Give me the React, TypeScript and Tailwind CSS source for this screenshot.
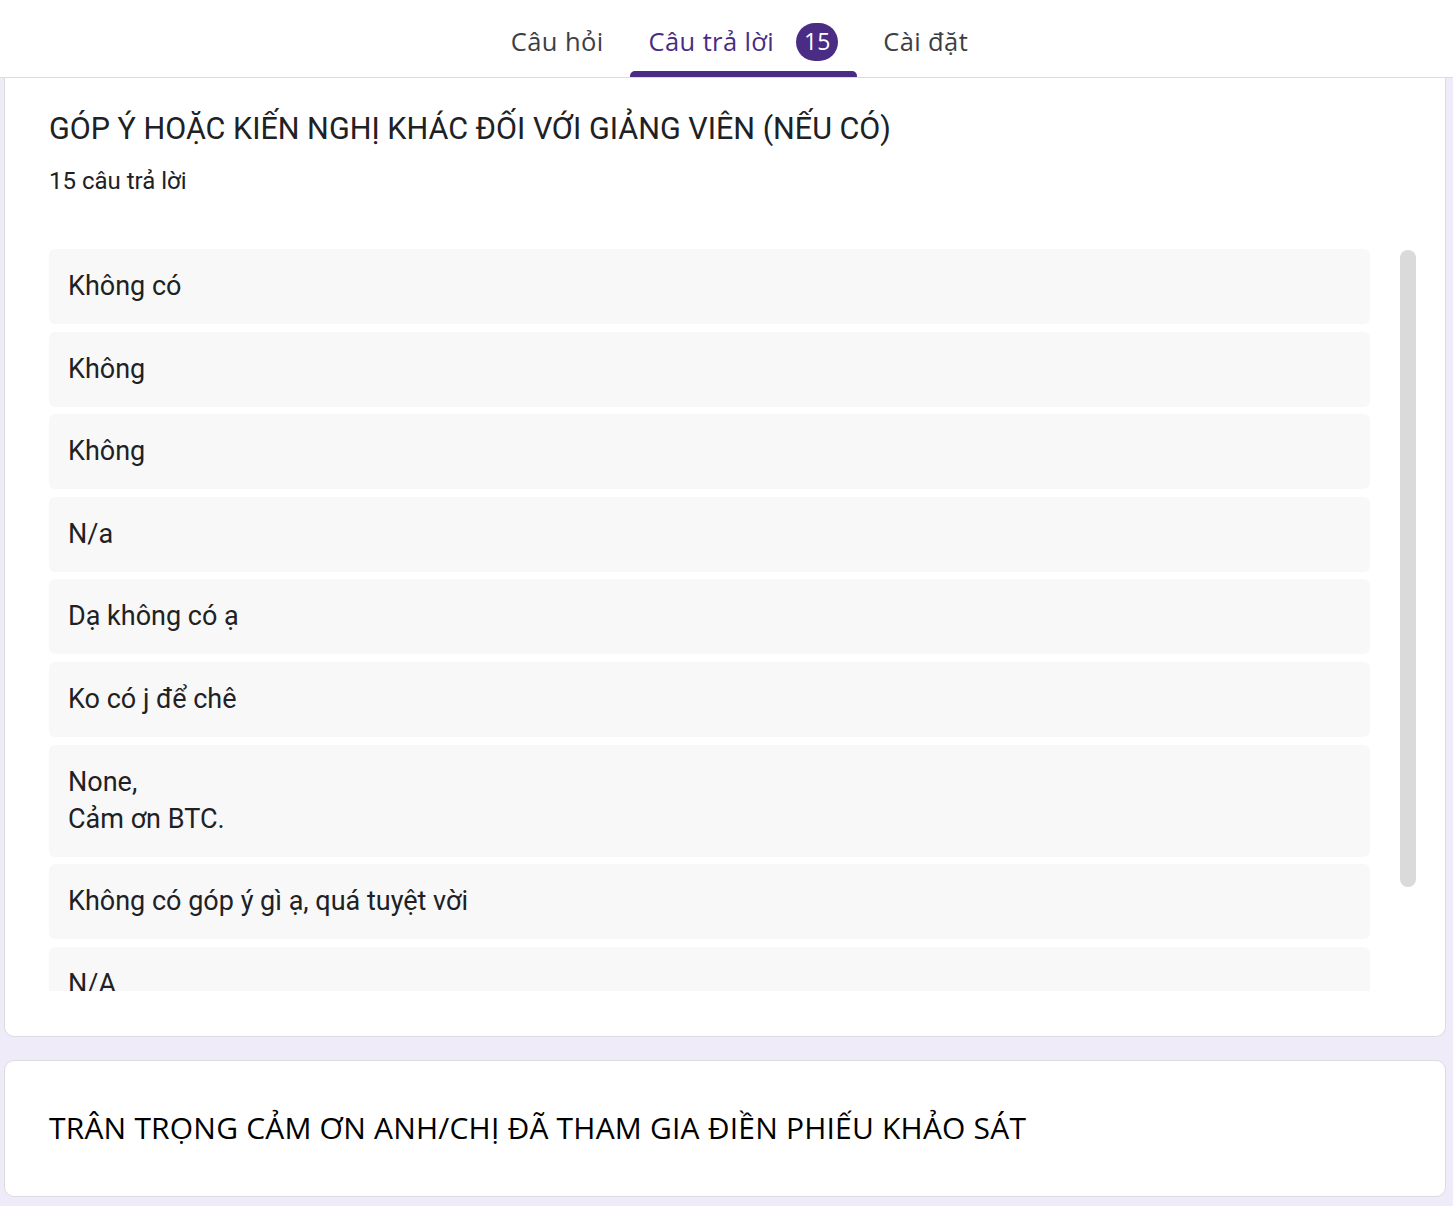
import React from "react";

const responses: string[][] = [
  ["Không có"],
  ["Không"],
  ["Không"],
  ["N/a"],
  ["Dạ không có ạ"],
  ["Ko có j để chê"],
  ["None,", "Cảm ơn BTC."],
  ["Không có góp ý gì ạ, quá tuyệt vời"],
  ["N/A"],
  ["Không"],
];

export default function App() {
  return (
    <div className="w-full bg-[#f0ebf8] overflow-hidden" style={{ height: 1206 }}>
      {/* Header tabs */}
      <div className="h-[78px] bg-white border-b border-[#dadce0] flex justify-center items-stretch pl-[26px] gap-[7px] font-['Open_Sans',sans-serif] text-[25.5px] tracking-[0.4px]">
        <div className="px-[19px] flex items-center text-[#3c4043] pt-[6px]">Câu hỏi</div>
        <div className="px-[19px] relative flex items-center text-[#4a2c85] pt-[6px]">
          <span>Câu trả lời</span>
          <span className="ml-[22px] w-[42px] h-[38px] rounded-full bg-[#4a2c85] text-white text-[23px] tracking-normal flex items-center justify-center">15</span>
          <div className="absolute left-0 right-0 bottom-0 h-[6px] bg-[#4a2c85] rounded-t-[5px]" />
        </div>
        <div className="px-[19px] flex items-center text-[#3c4043] pt-[6px]">Cài đặt</div>
      </div>

      {/* Card 1 */}
      <div className="mx-[4px] w-[1442px] bg-white border-x border-b border-[#dadce0] rounded-b-[10px] pl-[44px] pr-[29px] pt-[29px] pb-[45px] font-['Roboto',sans-serif]">
        <div className="text-[30.5px] leading-[44px] text-[#202124]">GÓP Ý HOẶC KIẾN NGHỊ KHÁC ĐỐI VỚI GIẢNG VIÊN (NẾU CÓ)</div>
        <div className="mt-[15px] text-[24px] leading-[30px] text-[#202124]">15 câu trả lời</div>
        <div className="mt-[53px] flex gap-[30px]">
          <div className="w-[1321px] h-[742px] overflow-hidden flex flex-col gap-[7.6px]">
            {responses.map((lines, i) => (
              <div key={i} className="shrink-0 bg-[#f8f8f8] rounded-[6px] px-[19px] py-[19px] text-[27px] leading-[37px] text-[#202124]">
                {lines.map((l, j) => (
                  <div key={j}>{l}</div>
                ))}
              </div>
            ))}
          </div>
          <div className="w-[16px] h-[637px] mt-[1px] rounded-full bg-[#dadada]" />
        </div>
      </div>

      {/* Card 2 */}
      <div className="mx-[4px] mt-[23px] w-[1442px] h-[137px] bg-white border border-[#dadce0] rounded-[10px] pl-[44px] flex items-center font-['Open_Sans',sans-serif]">
        <div className="text-[30px] tracking-[0.2px] text-black pb-[2px]">TRÂN TRỌNG CẢM ƠN ANH/CHỊ ĐÃ THAM GIA ĐIỀN PHIẾU KHẢO SÁT</div>
      </div>
    </div>
  );
}
